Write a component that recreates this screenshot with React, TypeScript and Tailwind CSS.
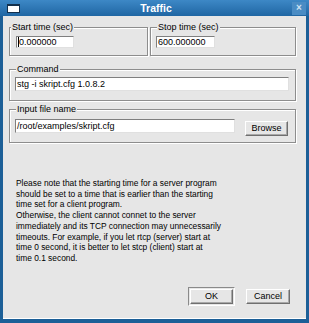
import React from 'react';

const lines = [
  'Please note that the starting time for a server program',
  'should be set to a time that is earlier than the starting',
  'time set for a client program.',
  'Otherwise, the client cannot connet to the server',
  'immediately and its TCP connection may unnecessarily',
  'timeouts. For example, if you let rtcp (server) start at',
  'time 0 second, it is better to let stcp (client) start at',
  'time 0.1 second.',
];

const frame = "border border-[#8d8d8d] shadow-[inset_1px_1px_0_#fff,1px_1px_0_#fff] min-w-0";
const legend = "px-px text-[9px] leading-[10px] whitespace-nowrap bg-[#e6e6e6]";
const entry = "bg-white border border-[#7f7f7f] border-b-[#e0e0e0] border-r-[#e0e0e0] text-[9px] leading-[11px] px-px flex items-center whitespace-nowrap overflow-hidden";
const button = "bg-[#e6e6e6] border border-white border-b-[#6f6f6f] border-r-[#6f6f6f] shadow-[inset_-1px_-1px_0_#a8a8a8] text-[9px] leading-none flex items-center justify-center";

export default function App() {
  return (
    <div className="w-[309px] h-[323px] flex flex-col bg-[#1c5f97] font-['Liberation_Sans',Arial,sans-serif] text-black select-none">
      {/* title bar */}
      <div className="h-[16px] shrink-0 flex items-center pl-[7px] pr-[3px] bg-gradient-to-b from-[#3d88c6] to-[#1f66a3]">
        <div className="w-[13px] h-[9px] bg-white border border-[#12304d] border-t-2" />
        <div className="flex-1 text-center text-white font-bold text-[10.5px] leading-none">Traffic</div>
        <div className="w-[14px] h-[13px] bg-[#4a8cc4] flex items-center justify-center text-[#cfe3f3] font-bold text-[10px] leading-none">
          ×
        </div>
      </div>

      {/* dialog body */}
      <div className="flex-1 mx-[3px] mb-[4px] bg-[#e6e6e6] border-b border-white flex flex-col pl-[6px] pr-[10px] pt-[6px]">
        <div className="flex gap-[2px]">
          <fieldset className={`${frame} w-[139px] px-[6px] pt-[4px] pb-[7px]`}>
            <legend className={`${legend} -ml-[5px]`}>Start time (sec)</legend>
            <div className={`${entry} w-[58px] h-[12px]`}>
              <span className="w-px h-[10px] bg-black shrink-0" />
              0.000000
            </div>
          </fieldset>
          <fieldset className={`${frame} w-[146px] px-[5px] pt-[4px] pb-[7px]`}>
            <legend className={`${legend} ml-[1px]`}>Stop time (sec)</legend>
            <div className={`${entry} w-[59px] h-[12px]`}>600.000000</div>
          </fieldset>
        </div>

        <fieldset className={`${frame} mt-[8px] pl-[5px] pr-[6px] pt-[3px] pb-[9px]`}>
          <legend className={`${legend} ml-[1px]`}>Command</legend>
          <div className={`${entry} h-[14px]`}>stg -i skript.cfg 1.0.8.2</div>
        </fieldset>

        <fieldset className={`${frame} mt-[3px] pl-[5px] pr-[7px] pt-[5px] pb-[6px]`}>
          <legend className={`${legend} ml-[1px]`}>Input file name</legend>
          <div className="flex items-start">
            <div className={`${entry} w-[220px] h-[14px]`}>/root/examples/skript.cfg</div>
            <button className={`${button} ml-[10px] mt-[2px] w-[43px] h-[15px]`}>Browse</button>
          </div>
        </fieldset>

        <div className="mt-[35px] ml-[7px] text-[8.4px] leading-[10.7px]">
          {lines.map((l) => (
            <div key={l} className="whitespace-nowrap">{l}</div>
          ))}
        </div>

        <div className="mt-auto mb-[12px] flex justify-end items-center pr-[6px]">
          <div className="border border-[#8a8a8a] border-b-white border-r-white p-px">
            <button className={`${button} w-[43px] h-[15px]`}>OK</button>
          </div>
          <button className={`${button} ml-[11px] w-[44px] h-[15px]`}>Cancel</button>
        </div>
      </div>
    </div>
  );
}
